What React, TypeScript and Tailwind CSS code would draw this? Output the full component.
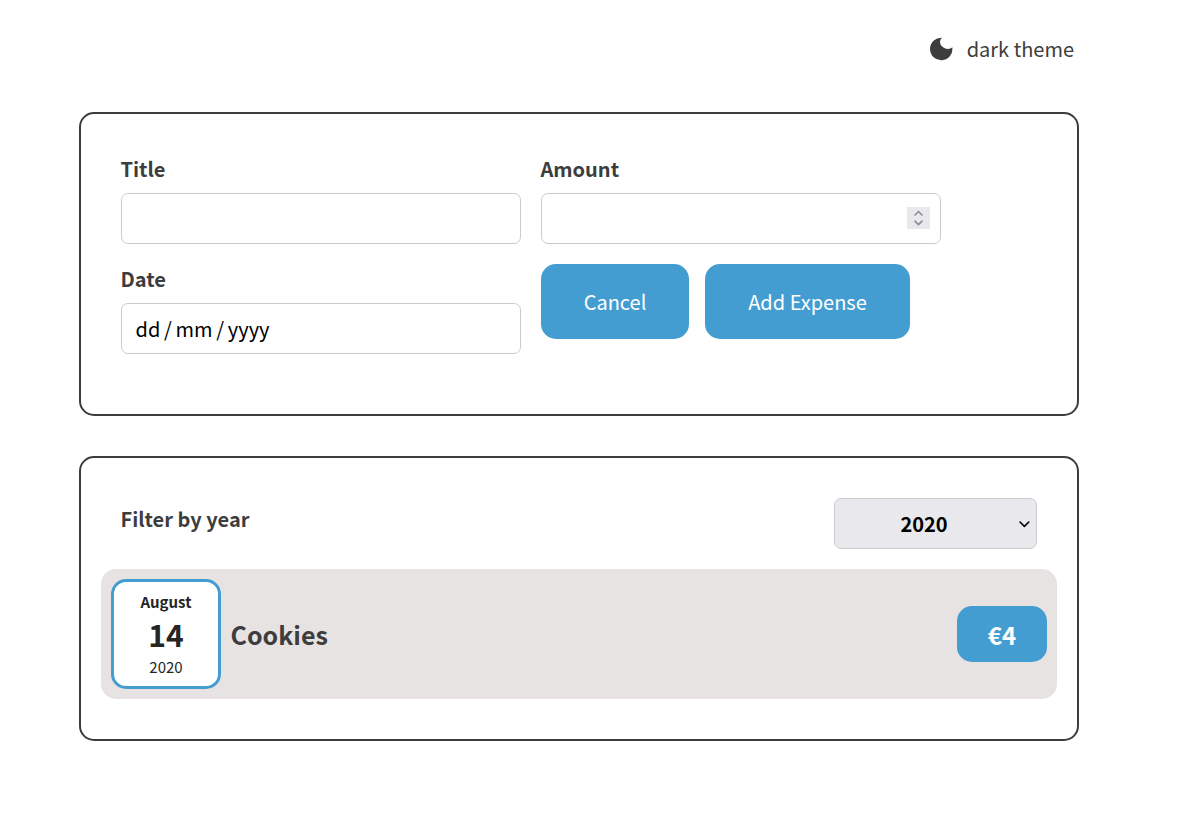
import React from "react";

const inputBox =
  "flex h-[51px] w-full items-center rounded-[7px] border border-[#cccccc] bg-white";
const label = "-ml-[0.5px] mb-[10px] block h-[29px] text-xl leading-[29px] font-bold";
const button =
  "h-[75px] rounded-[15px] bg-[#449dd1] text-xl leading-[30px] text-white";

function Moon() {
  return (
    <svg width="24" height="24" viewBox="0 0 24 24" fill="#3d3d3d">
      <path d="M13 0.8A11.2 11.2 0 1 0 23.3 10.3C20.8 12.6 16.2 12.6 13.2 9.6C10.5 7 10.3 3.4 13 0.8Z" />
    </svg>
  );
}

function ExpenseForm() {
  return (
    <section className="h-[304px] rounded-[15px] border-2 border-[#3d3d3d] p-10">
      <form className="grid grid-cols-[400px_400px] gap-5">
        <div>
          <label className={label}>Title</label>
          <div className={inputBox} />
        </div>
        <div>
          <label className={label}>Amount</label>
          <div className={`${inputBox} justify-end pr-[10px] pb-px`}>
            <span className="flex h-[22px] w-[23px] items-center justify-center bg-[#e9e9ed]">
              <svg width="11" height="16" viewBox="0 0 11 16" fill="none" stroke="#8f8f9d" strokeWidth="1.7" strokeLinecap="round" strokeLinejoin="round">
                <path d="M2 5L5.5 1.5L9 5M2 11.2L5.5 14.7L9 11.2" />
              </svg>
            </span>
          </div>
        </div>
        <div>
          <label className={label}>Date</label>
          <div className={`${inputBox} gap-[3.7px] pt-px pl-[13.5px] text-xl leading-[30px] text-black`}>
            <span>dd</span>
            <span>/</span>
            <span>mm</span>
            <span>/</span>
            <span>yyyy</span>
          </div>
        </div>
        <div className="flex items-start gap-4">
          <button type="button" className={`${button} w-[148px]`}>Cancel</button>
          <button type="button" className={`${button} w-[205px]`}>Add Expense</button>
        </div>
      </form>
    </section>
  );
}

function ExpenseList() {
  return (
    <section className="mt-10 h-[285px] rounded-[15px] border-2 border-[#3d3d3d] px-5 pt-10">
      <div className="flex items-start justify-between px-5">
        <span className="-ml-[0.5px] mt-[6px] text-xl leading-[30px] font-bold">Filter by year</span>
        <div className="flex h-[51px] w-[203px] items-center rounded-[7px] border border-[#cccccc] bg-[#e9e9ed] pr-[6px] text-xl leading-[30px] font-bold text-black">
          <span className="mr-[5px] flex-1 text-center">2020</span>
          <svg width="12" height="8" viewBox="0 0 12 8" fill="none" stroke="#000000" strokeWidth="1.6" strokeLinecap="round" strokeLinejoin="round">
            <path d="M2 2L6.4 6.4L10.8 2" />
          </svg>
        </div>
      </div>
      <article className="mt-5 flex h-[130px] items-center rounded-[15px] bg-[#e7e3e2] p-[10px]">
        <div className="flex h-[110px] w-[110px] flex-col items-center rounded-[15px] border-[3px] border-[#449dd1] bg-white pt-2 text-[#252525]">
          <span className="text-[15px] leading-6 font-bold">August</span>
          <span className="text-[30px] leading-[40px] font-bold">14</span>
          <span className="mt-0.5 text-[15px] leading-[22px]">2020</span>
        </div>
        <h2 className="ml-[9.5px] flex-1 text-[25px] leading-[38px] font-bold">Cookies</h2>
        <div className="flex h-14 w-[90px] items-center justify-center rounded-[15px] bg-[#449dd1] pt-0.5 text-2xl font-bold text-white">
          €4
        </div>
      </article>
    </section>
  );
}

export default function App() {
  return (
    <div className="min-h-screen bg-white pl-[79px] font-['Noto_Sans_CJK_SC',sans-serif] text-[#3d3d3d]">
      <div className="w-[1000px]">
        <header className="flex h-[112px] items-start justify-end pt-[34px] pr-[5px]">
          <button type="button" className="flex items-center gap-[14px] text-xl leading-[30px]">
            <Moon />
            <span>dark theme</span>
          </button>
        </header>
        <ExpenseForm />
        <ExpenseList />
      </div>
    </div>
  );
}
